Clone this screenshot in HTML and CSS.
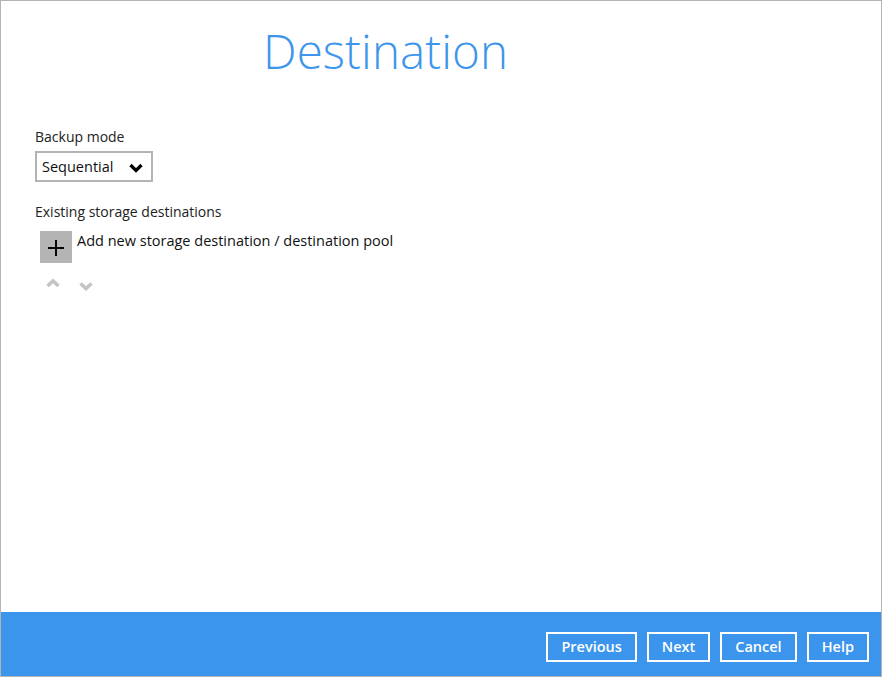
FILE: index.html
```html
<!DOCTYPE html>
<html lang="en">
<head>
    <meta charset="UTF-8">
    <meta name="viewport" content="width=device-width, initial-scale=1.0">
    <title>Destination</title>
    <link rel="stylesheet" href="styles.css">
</head>
<body>
    <div class="window">
        <div class="content">
            <h1 class="title">Destination</h1>

            <div class="label">Backup mode</div>
            <div class="select">
                <span>Sequential</span>
                <svg class="chevron" width="14" height="10" viewBox="0 0 14 10">
                    <path d="M1.5 2 L7 7.5 L12.5 2" fill="none" stroke="#000" stroke-width="3.2"/>
                </svg>
            </div>

            <div class="label section">Existing storage destinations</div>
            <div class="add-row">
                <div class="add-btn">
                    <svg width="18" height="18" viewBox="0 0 18 18">
                        <path d="M9 1 V17 M1 9 H17" stroke="#000" stroke-width="2"/>
                    </svg>
                </div>
                <span class="add-text">Add new storage destination / destination pool</span>
            </div>

            <div class="order">
                <svg width="14" height="10" viewBox="0 0 14 10">
                    <path d="M1.5 8 L7 3 L12.5 8" fill="none" stroke="#c4c4c4" stroke-width="3.6"/>
                </svg>
                <svg class="down" width="14" height="10" viewBox="0 0 14 10">
                    <path d="M1.5 2.5 L7 7.5 L12.5 2.5" fill="none" stroke="#c4c4c4" stroke-width="3.6"/>
                </svg>
            </div>
        </div>

        <div class="footer">
            <button class="footer-btn">Previous</button>
            <button class="footer-btn">Next</button>
            <button class="footer-btn">Cancel</button>
            <button class="footer-btn">Help</button>
        </div>
    </div>
</body>
</html>
```

FILE: styles.css
```css
* {
    margin: 0;
    padding: 0;
    box-sizing: border-box;
    font-family: 'Open Sans', sans-serif;
}

body {
    background: #fff;
    width: 882px;
    height: 677px;
    overflow: hidden;
}

.window {
    width: 882px;
    height: 677px;
    border: 1px solid #b4b4b4;
    display: flex;
    flex-direction: column;
    background: #fff;
}

.content {
    flex: 1;
    padding: 0 34px;
}

.title {
    font-weight: 300;
    font-size: 47.5px;
    color: #3d96ec;
    line-height: 68px;
    margin-top: 16px;
    padding-left: 228px;
    letter-spacing: 0.1px;
}

.label {
    font-size: 14px;
    color: #222;
    line-height: 20px;
    margin-top: 42px;
}

.label.section {
    margin-top: 20px;
}

.select {
    margin-top: 4px;
    width: 118px;
    height: 31px;
    border: 2px solid #b4b4b4;
    display: flex;
    align-items: center;
    justify-content: space-between;
    padding: 0 8px 0 5px;
    font-size: 14.5px;
    color: #111;
}

.chevron {
    margin-top: 2px;
}

.add-row {
    display: flex;
    align-items: flex-start;
    margin-top: 9px;
    padding-left: 5px;
}

.add-btn {
    width: 32px;
    height: 32px;
    background: #b4b4b4;
    display: flex;
    align-items: center;
    justify-content: center;
    padding-top: 1px;
}

.add-text {
    font-size: 14.5px;
    color: #111;
    margin-left: 5px;
    line-height: 20px;
}

.order {
    display: flex;
    gap: 19px;
    margin-top: 15px;
    padding-left: 11px;
}

.order .down {
    margin-top: 3px;
}

.footer {
    height: 64px;
    background: #3b95ec;
    display: flex;
    justify-content: flex-end;
    align-items: center;
    gap: 10px;
    padding: 5px 12px 0 0;
}

.footer-btn {
    background: transparent;
    border: 2px solid #fff;
    color: #fff;
    font-size: 14.5px;
    font-weight: 600;
    height: 30px;
    padding: 0 13px;
    cursor: pointer;
}
```
